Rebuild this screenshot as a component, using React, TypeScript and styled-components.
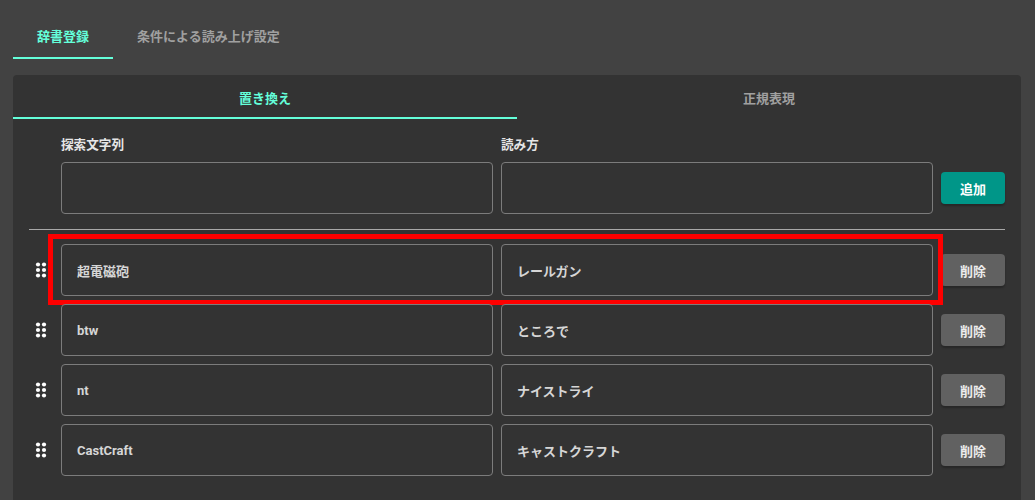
import { ReactElement } from 'react'
import styled, { createGlobalStyle } from 'styled-components'

const GlobalStyle = createGlobalStyle`
  html, body {
    margin: 0;
    padding: 0;
    background: #424242;
    overflow: hidden;
  }
  body {
    font-family: Roboto, 'Noto Sans CJK JP', 'Noto Sans', sans-serif;
    -webkit-font-smoothing: antialiased;
  }
`

const Page = styled.div`
  padding: 11px 14px 0 13px;
  min-height: 100vh;
  box-sizing: border-box;
`

const TopTabs = styled.div`
  display: flex;
  height: 48px;
  margin-bottom: 16px;
`

const TopTab = styled.div<{ $active?: boolean }>`
  display: flex;
  align-items: center;
  justify-content: center;
  padding: 0 24px;
  font-size: 13px;
  font-weight: 700;
  color: ${({ $active }): string => ($active ? '#64ffda' : '#a0a0a0')};
  box-shadow: ${({ $active }): string =>
    $active ? 'inset 0 -2px 0 #64ffda' : 'none'};
`

const Card = styled.div`
  background: #333333;
  border-radius: 4px 4px 0 0;
  padding-bottom: 40px;
`

const InnerTabs = styled.div`
  display: grid;
  grid-template-columns: 1fr 1fr;
  height: 44px;
`

const InnerTab = styled(TopTab)`
  padding: 0;
`

const Body = styled.div`
  padding: 16px 16px 0;
`

const Row = styled.div`
  display: grid;
  grid-template-columns: 24px 1fr 64px;
  column-gap: 8px;
  align-items: center;
`

const Fields = styled.div<{ $marked?: boolean }>`
  position: relative;
  display: grid;
  grid-template-columns: 1fr 1fr;
  gap: 8px;

  ${({ $marked }): string =>
    $marked
      ? `&::after {
          content: '';
          position: absolute;
          left: -13px;
          top: -10px;
          right: -10px;
          bottom: -9px;
          border: 5px solid #ff0000;
          pointer-events: none;
        }`
      : ''}
`

const Field = styled.div`
  display: flex;
  flex-direction: column;
`

const Label = styled.div`
  font-size: 12.6px;
  font-weight: 700;
  line-height: 20px;
  color: #e6e6e6;
  margin-bottom: 7px;
`

const Box = styled.div`
  height: 52px;
  box-sizing: border-box;
  border: 1px solid #7c7c7c;
  border-radius: 4px;
  display: flex;
  align-items: center;
  padding: 0 15px;
  font-size: 13px;
  font-weight: 700;
  color: #d6d6d6;
`

const Button = styled.button<{ $primary?: boolean }>`
  width: 64px;
  height: 32px;
  border: 0;
  border-radius: 4px;
  font-family: inherit;
  font-size: 13px;
  font-weight: 700;
  color: ${({ $primary }): string => ($primary ? '#ffffff' : '#ececec')};
  background: ${({ $primary }): string => ($primary ? '#009688' : '#616161')};
  box-shadow: 0 2px 2px rgba(0, 0, 0, 0.25);
  align-self: end;
  margin-bottom: 10px;
`

const RowButton = styled(Button)`
  align-self: center;
  margin-bottom: 0;
`

const Divider = styled.hr`
  border: 0;
  border-top: 1px solid #a8a8a8;
  margin: 15px 0 14px;
`

const List = styled.div`
  display: flex;
  flex-direction: column;
  gap: 8px;
`

const Handle = styled.svg`
  width: 24px;
  height: 24px;
  display: block;
`

const DragIcon = (): ReactElement => (
  <Handle viewBox="0 0 24 24">
    {[6.5, 12, 17.5].map((cy) =>
      [9, 15].map((cx) => (
        <circle key={`${cx}-${cy}`} cx={cx} cy={cy} r={2.1} fill="#ffffff" />
      ))
    )}
  </Handle>
)

const entries = [
  { word: '超電磁砲', reading: 'レールガン' },
  { word: 'btw', reading: 'ところで' },
  { word: 'nt', reading: 'ナイストライ' },
  { word: 'CastCraft', reading: 'キャストクラフト' },
]

const App = (): ReactElement => {
  return (
    <>
      <GlobalStyle />
      <Page>
        <TopTabs>
          <TopTab $active>辞書登録</TopTab>
          <TopTab>条件による読み上げ設定</TopTab>
        </TopTabs>
        <Card>
          <InnerTabs>
            <InnerTab $active>置き換え</InnerTab>
            <InnerTab>正規表現</InnerTab>
          </InnerTabs>
          <Body>
            <Row>
              <span />
              <Fields>
                <Field>
                  <Label>探索文字列</Label>
                  <Box />
                </Field>
                <Field>
                  <Label>読み方</Label>
                  <Box />
                </Field>
              </Fields>
              <Button $primary>追加</Button>
            </Row>
            <Divider />
            <List>
              {entries.map((e, i) => (
                <Row key={e.word}>
                  <DragIcon />
                  <Fields $marked={i === 0}>
                    <Box>{e.word}</Box>
                    <Box>{e.reading}</Box>
                  </Fields>
                  <RowButton>削除</RowButton>
                </Row>
              ))}
            </List>
          </Body>
        </Card>
      </Page>
    </>
  )
}

export default App
